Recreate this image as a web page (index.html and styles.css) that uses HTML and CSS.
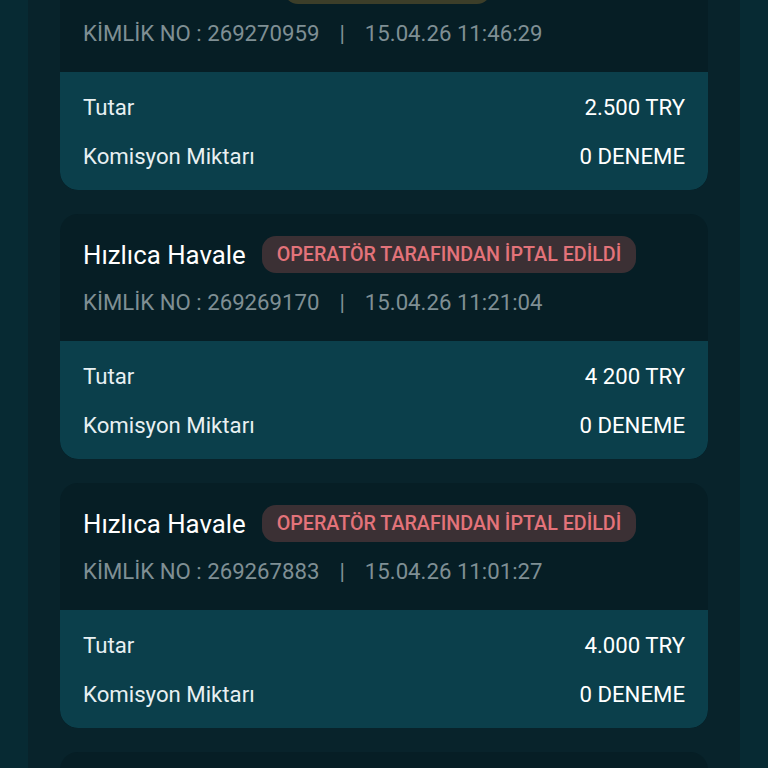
FILE: index.html
```html
<!DOCTYPE html>
<html lang="tr">
<head>
<meta charset="utf-8"/>
<meta content="width=device-width, initial-scale=1.0" name="viewport"/>
<title>İşlem Geçmişi</title>
<link rel="stylesheet" href="styles.css">
</head>
<body>
<div class="page">
<div class="list">

<div class="card">
<div class="card-head">
<div class="title-row">
<span class="title">Papara Havalesi</span>
<span class="badge pending">İŞLEM BEKLENİYOR</span>
</div>
<p class="meta">KİMLİK NO : 269270959<span class="sep">|</span>15.04.26 11:46:29</p>
</div>
<div class="card-body">
<div class="row"><span>Tutar</span><span class="value">2.500 TRY</span></div>
<div class="row"><span>Komisyon Miktarı</span><span class="value">0 DENEME</span></div>
</div>
</div>

<div class="card">
<div class="card-head">
<div class="title-row">
<span class="title">Hızlıca Havale</span>
<span class="badge cancelled">OPERATÖR TARAFINDAN İPTAL EDİLDİ</span>
</div>
<p class="meta">KİMLİK NO : 269269170<span class="sep">|</span>15.04.26 11:21:04</p>
</div>
<div class="card-body">
<div class="row"><span>Tutar</span><span class="value">4 200 TRY</span></div>
<div class="row"><span>Komisyon Miktarı</span><span class="value">0 DENEME</span></div>
</div>
</div>

<div class="card">
<div class="card-head">
<div class="title-row">
<span class="title">Hızlıca Havale</span>
<span class="badge cancelled">OPERATÖR TARAFINDAN İPTAL EDİLDİ</span>
</div>
<p class="meta">KİMLİK NO : 269267883<span class="sep">|</span>15.04.26 11:01:27</p>
</div>
<div class="card-body">
<div class="row"><span>Tutar</span><span class="value">4.000 TRY</span></div>
<div class="row"><span>Komisyon Miktarı</span><span class="value">0 DENEME</span></div>
</div>
</div>

<div class="card">
<div class="card-head">
<div class="title-row">
<span class="title">Hızlıca Havale</span>
<span class="badge cancelled">OPERATÖR TARAFINDAN İPTAL EDİLDİ</span>
</div>
<p class="meta">KİMLİK NO : 269266412<span class="sep">|</span>15.04.26 10:48:12</p>
</div>
<div class="card-body">
<div class="row"><span>Tutar</span><span class="value">3.000 TRY</span></div>
<div class="row"><span>Komisyon Miktarı</span><span class="value">0 DENEME</span></div>
</div>
</div>

</div>
</div>
</body>
</html>
```

FILE: styles.css
```css
html, body {
    height: 100%;
}

body {
    margin: 0;
    background: #072a33;
    font-family: Roboto, "Noto Sans", sans-serif;
    color: #e8f0f2;
    overflow: hidden;
}

.page {
    margin: 0 28px;
    padding: 0 32px;
    background: #08232b;
    min-height: 100%;
}

/* page is scrolled, first card is cut off at the top */
.list {
    display: flex;
    flex-direction: column;
    gap: 24px;
    margin-top: -55px;
}

.card {
    border-radius: 18px;
    overflow: hidden;
    background: #061e25;
}

.card-head {
    padding: 22px 23px 27px;
}

.title-row {
    display: flex;
    align-items: center;
    gap: 16px;
    height: 37px;
}

.title {
    font-size: 25.8px;
    color: #ffffff;
}

.badge {
    font-size: 19.7px;
    font-weight: 500;
    padding: 0 15px;
    height: 37px;
    line-height: 37px;
    border-radius: 14px;
}

.badge.cancelled {
    background: #3b3034;
    color: #e3737a;
}

.badge.pending {
    background: #3c3e29;
    color: #e6c85a;
}

.meta {
    margin: 17px 0 0;
    font-size: 22.2px;
    line-height: 24px;
    color: #7f8f94;
}

.sep {
    margin: 0 20px;
}

.card-body {
    background: #0b3f4b;
    padding: 22px 23px 21px 23px;
    display: flex;
    flex-direction: column;
    gap: 23px;
    border-radius: 0 0 18px 18px;
}

.row {
    display: flex;
    justify-content: space-between;
    font-size: 22.2px;
    line-height: 26px;
}

.value {
    color: #ffffff;
}
```
